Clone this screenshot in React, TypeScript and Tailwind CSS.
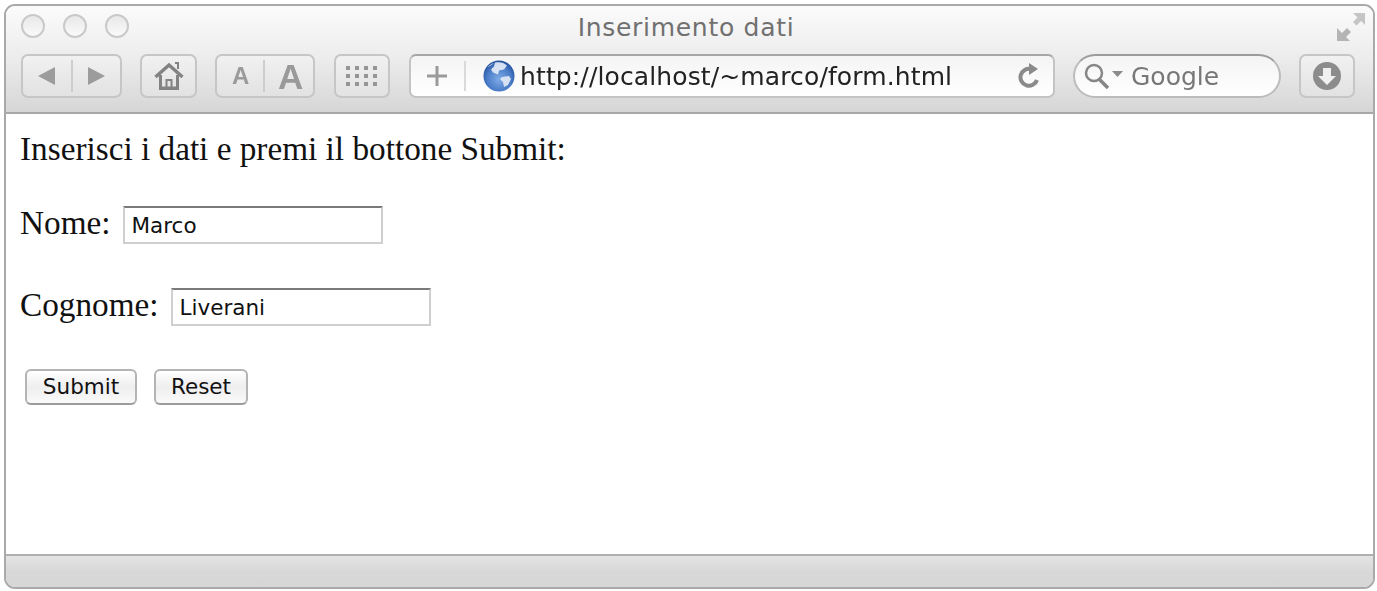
import type { ReactNode } from 'react';

const sans = 'font-["DejaVu_Sans",sans-serif]';

// Grey rounded toolbar button, also used for the split ones
function ToolButton({ className, children }: { className: string; children: ReactNode }) {
  return (
    <div
      className={`flex h-[44px] shrink-0 items-center rounded-[7px] border-2 border-[#c6c6c6] bg-gradient-to-b from-[#f1f1f1] to-[#e2e2e2] ${className}`}
    >
      {children}
    </div>
  );
}

function Divider({ className }: { className: string }) {
  return <div className={`w-[2px] bg-[#cdcdcd] ${className}`} />;
}

function TrafficLight() {
  return (
    <div className="size-[24px] rounded-full border-2 border-[#c9c9c9] bg-gradient-to-b from-[#e8e8e8] to-[#fafafa]" />
  );
}

function ExpandIcon() {
  return (
    <svg width="30" height="30" viewBox="0 0 30 30" fill="#b4b4b4">
      <path d="M17 1h12v12l-4-4-4.500 4.500-3.500-3.500L21.500 5.500z" opacity="0.75" />
      <path d="M1 16v13h13l-4-4 5-5-4-4-5 5z" />
    </svg>
  );
}

function HomeIcon() {
  return (
    <svg width="30" height="28" viewBox="0 0 30 28" fill="none" stroke="#838383">
      <path d="M1.500 15 15 3l13.500 12" strokeWidth="3.500" />
      <path d="M6.500 13v13h17V13" strokeWidth="3" />
      <path d="M21 1h3v6" strokeWidth="2" />
      <path d="M12.500 27v-9h5v9" strokeWidth="2" />
      <path d="M5 26.500h20" strokeWidth="3" />
    </svg>
  );
}

function GridIcon() {
  return (
    <svg width="32" height="20" viewBox="0 0 32 20" fill="#959595">
      {[0, 8, 16].map((y) =>
        [0, 9, 18, 27].map((x) => <rect key={`${x}-${y}`} x={x} y={y} width="4" height="4" />),
      )}
    </svg>
  );
}

function GlobeIcon() {
  return (
    <svg width="32" height="32" viewBox="0 0 32 32">
      <defs>
        <radialGradient id="globe" cx="0.5" cy="0.6" r="0.6">
          <stop offset="0" stopColor="#7fabe6" />
          <stop offset="0.65" stopColor="#4a7cc8" />
          <stop offset="1" stopColor="#234f9c" />
        </radialGradient>
      </defs>
      <circle cx="16" cy="16" r="15.500" fill="url(#globe)" />
      <path d="M12 2.500c5-1 9 0 12 3l-3 4-5 1-1 4-5-2-2-3 3-3z" fill="#e6edf7" opacity="0.9" />
      <path d="M19 17l7-1 2 3-3 6-4 2-1-5-3-3z" fill="#e3ebf6" opacity="0.9" />
      <path d="M4 8c2-2.500 4-4 7-5-2 2-6 4-7 5z" fill="#ffffff" opacity="0.7" />
    </svg>
  );
}

function ReloadIcon() {
  return (
    <svg width="22" height="26" viewBox="0 0 22 26" fill="none" stroke="#8a8a8a" strokeWidth="4">
      <path d="M19 17a8.500 8.500 0 1 1-6-11" />
      <path d="M11 0l9 6-9 6z" fill="#8a8a8a" stroke="none" />
    </svg>
  );
}

function SearchIcon() {
  return (
    <svg width="40" height="26" viewBox="0 0 40 26" fill="none" stroke="#868686">
      <circle cx="10" cy="10" r="8" strokeWidth="2.500" />
      <path d="M15 16l9 9" strokeWidth="3.500" />
      <path d="M28 8h11l-5.500 6z" fill="#8a8a8a" stroke="none" />
    </svg>
  );
}

function DownloadIcon() {
  return (
    <svg width="28" height="28" viewBox="0 0 28 28">
      <circle cx="14" cy="14" r="14" fill="#8c8c8c" />
      <path d="M10 6h8v8h5l-9 9-9-9h5z" fill="#f0f0f0" />
    </svg>
  );
}

function Field({ label, value, gap }: { label: string; value: string; gap: string }) {
  return (
    <div className="flex h-[38px] items-center">
      <span className={`pb-[4px] text-[33.250px] leading-[38px] text-[#111] ${gap}`}>{label}</span>
      <div
        className={`flex h-[38px] w-[260px] items-center border-2 border-[#cfcfcf] border-t-[#7a7a7a] bg-white pl-[7px] pt-[2px] text-[21.500px] text-[#111] ${sans}`}
      >
        {value}
      </div>
    </div>
  );
}

function FormButton({ label, width }: { label: string; width: string }) {
  return (
    <button
      className={`h-[36px] rounded-[6px] border-2 border-[#b4b4b4] border-b-[#9c9c9c] bg-gradient-to-b from-[#ffffff] via-[#eeeeee] to-[#fafafa] text-[21.500px] text-[#111] ${sans} ${width}`}
    >
      {label}
    </button>
  );
}

export default function App() {
  return (
    <div className="h-[591px] w-[1377px] overflow-hidden bg-white pb-[2px] pl-[4px] pr-[2px] pt-[4px]">
      <div className="flex h-[585px] flex-col overflow-hidden rounded-[11px] border-2 border-[#a9a9a9] blur-[0.4px]">
        {/* title bar + toolbar */}
        <div className="h-[108px] shrink-0 border-b-2 border-[#a8a8a8] bg-gradient-to-b from-[#fbfbfb] via-[#ececec] to-[#d6d6d6]">
          <div className="grid h-[48px] grid-cols-[1fr_auto_1fr] pl-[15px] pr-[22px] pt-[8px]">
            <div className="flex gap-[18px]">
              <TrafficLight />
              <TrafficLight />
              <TrafficLight />
            </div>
            <div className={`text-[25px] leading-[28px] tracking-[0.7px] text-[#707070] ${sans}`}>
              Inserimento dati
            </div>
            <div className="-mr-[15px] -mt-[2px] flex justify-end">
              <ExpandIcon />
            </div>
          </div>
          <div className="flex gap-[18px] pl-[15px] pr-[18px]">
            <ToolButton className="w-[101px]">
              <svg className="ml-[15px]" width="18" height="18" viewBox="0 0 18 18" fill="#9c9c9c">
                <path d="M17 0v18L0 9z" />
              </svg>
              <Divider className="ml-[15px] h-[32px]" />
              <svg className="ml-[14px]" width="18" height="18" viewBox="0 0 18 18" fill="#9c9c9c">
                <path d="M1 0v18l17-9z" />
              </svg>
            </ToolButton>
            <ToolButton className="w-[57px] justify-center">
              <HomeIcon />
            </ToolButton>
            <ToolButton className='w-[100px] font-["Liberation_Sans",sans-serif] font-bold text-[#9a9a9a]'>
              <span className="ml-[15px] w-[18px] text-[24px] leading-none">A</span>
              <Divider className="ml-[13px] h-[32px]" />
              <span className="ml-[13px] text-[35px] leading-none">A</span>
            </ToolButton>
            <ToolButton className="ml-[1px] w-[56px] justify-center">
              <GridIcon />
            </ToolButton>
            <div className="ml-[1px] flex h-[44px] flex-1 items-center rounded-[7px] border-2 border-[#c4c4c4] border-t-[#a6a6a6] bg-gradient-to-b from-[#f4f4f4] to-[#ffffff]">
              <svg className="ml-[16px]" width="20" height="20" viewBox="0 0 20 20" fill="#9a9a9a">
                <path d="M8.500 0h3v8.500H20v3h-8.500V20h-3v-8.500H0v-3h8.500z" />
              </svg>
              <Divider className="ml-[17px] h-[30px] bg-[#dadada]" />
              <div className="ml-[17px]">
                <GlobeIcon />
              </div>
              <span
                className={`ml-[5px] flex-1 text-[25px] leading-none tracking-[0.12px] text-[#222] ${sans}`}
              >
                http://localhost/~marco/form.html
              </span>
              <div className="mr-[13px]">
                <ReloadIcon />
              </div>
            </div>
            <div className="flex h-[44px] w-[208px] shrink-0 items-center rounded-full border-2 border-[#bcbcbc] border-t-[#9c9c9c] bg-gradient-to-b from-[#f4f4f4] to-[#ffffff] pl-[9px]">
              <SearchIcon />
              <span className={`ml-[7px] text-[25px] leading-none text-[#777] ${sans}`}>Google</span>
            </div>
            <ToolButton className="w-[56px] justify-center">
              <DownloadIcon />
            </ToolButton>
          </div>
        </div>

        {/* page */}
        <div className='flex-1 bg-white pl-[14px] pt-[16px] font-["Liberation_Serif",serif]'>
          <p className="text-[33.250px] leading-[38px] text-[#111]">
            Inserisci i dati e premi il bottone Submit:
          </p>
          <div className="mt-[38px] flex flex-col gap-[44px]">
            <Field label="Nome:" value="Marco" gap="mr-[12px]" />
            <Field label="Cognome:" value="Liverani" gap="mr-[12px]" />
          </div>
          <div className="ml-[5px] mt-[43px] flex gap-[17px]">
            <FormButton label="Submit" width="w-[112px]" />
            <FormButton label="Reset" width="w-[94px]" />
          </div>
        </div>

        {/* status bar */}
        <div className="h-[33px] shrink-0 border-t-2 border-[#b0b0b0] bg-gradient-to-b from-[#e4e4e4] via-[#d8d8d8] to-[#d6d6d6]" />
      </div>
    </div>
  );
}
